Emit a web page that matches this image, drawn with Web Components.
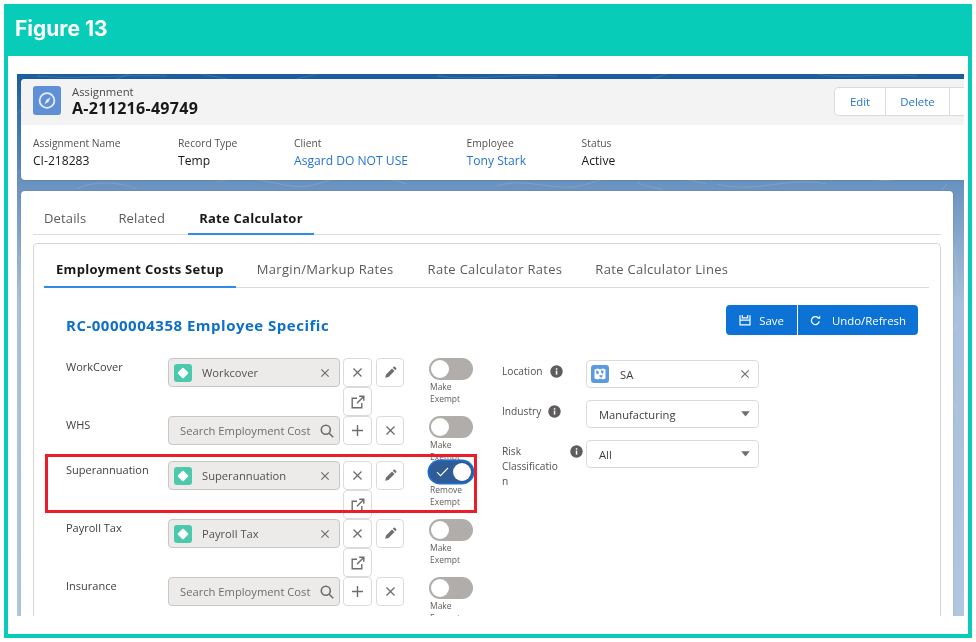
<!DOCTYPE html>
<html lang="en"><head><meta charset="utf-8"><title>Figure 13</title>
<style>
html,body{margin:0;padding:0;background:#fff;font-family:"Open Sans","Liberation Sans",sans-serif;}
</style></head><body>
<fig-frame title-text="Figure 13">
  <app-shell>
    <record-header slot="header" object="Assignment" name="A-211216-49749"></record-header>
    <tab-set slot="tabs" variant="outer" labels="Details|Related|Rate Calculator" active="2"></tab-set>
    <tab-set slot="subtabs" variant="inner" labels="Employment Costs Setup|Margin/Markup Rates|Rate Calculator Rates|Rate Calculator Lines" active="0"></tab-set>
    <span slot="title">RC-0000004358 Employee Specific</span>
    <action-bar slot="actions"></action-bar>
    <cost-row slot="left" label="WorkCover" value="Workcover"></cost-row>
    <cost-row slot="left" label="WHS" style="height:45px"></cost-row>
    <cost-row slot="left" label="Superannuation" value="Superannuation" on highlight></cost-row>
    <cost-row slot="left" label="Payroll Tax" value="Payroll Tax"></cost-row>
    <cost-row slot="left" label="Insurance"></cost-row>
    <side-field slot="right" label="Location" kind="lookup" value="SA" info-at="48"></side-field>
    <side-field slot="right" label="Industry" kind="select" value="Manufacturing" info-at="46"></side-field>
    <side-field slot="right" label="Risk Classification" kind="select" value="All" info-at="68" wrap></side-field>
  </app-shell>
</fig-frame>
<script>
const def=(name,render,css)=>customElements.define(name,class extends HTMLElement{
  connectedCallback(){ if(this.shadowRoot) return; const r=this.attachShadow({mode:'open'}); r.innerHTML='<style>'+css+'</style>'+render(this); }
});
const ic={
 x:s=>`<svg width="${s}" height="${s}" viewBox="0 0 12 12"><path d="M1.6 1.6l8.8 8.8M10.4 1.6l-8.8 8.8" stroke="#6f6d6b" stroke-width="1.4" fill="none"/></svg>`,
 plus:`<svg width="13" height="13" viewBox="0 0 13 13"><path d="M6.5 1v11M1 6.5h11" stroke="#6f6d6b" stroke-width="1.4" fill="none"/></svg>`,
 pencil:`<svg width="13" height="13" viewBox="0 0 13 13"><path d="M1.2 11.8l.8-3.3 6-6 2.5 2.5-6 6zM8.8 1.7l.9-.9a.9.9 0 0 1 1.2 0l1.3 1.3a.9.9 0 0 1 0 1.2l-.9.9z" fill="#706e6b"/></svg>`,
 ext:`<svg width="14" height="14" viewBox="0 0 14 14" fill="none" stroke="#6f6d6b" stroke-width="1.4"><path d="M6 3.2H1.2v9.6h9.6V8"/><path d="M6 8.2L12.4 1.7M8.2 1.2h4.6v4.6"/></svg>`,
 search:`<svg width="14" height="14" viewBox="0 0 14 14" fill="none" stroke="#6f6d6b" stroke-width="1.6"><circle cx="5.8" cy="5.8" r="4.5"/><path d="M9.2 9.2l4 4"/></svg>`,
 diamond:`<svg width="18" height="18" viewBox="0 0 18 18"><rect width="18" height="18" rx="3" fill="#4bc9ac"/><rect x="5" y="5" width="8" height="8" rx="1" fill="#fff" transform="rotate(45 9 9)"/></svg>`,
 info:`<svg width="13" height="13" viewBox="0 0 13 13"><circle cx="6.5" cy="6.5" r="6.2" fill="#5f5d5b"/><rect x="5.8" y="5.6" width="1.5" height="4" fill="#fff"/><rect x="5.8" y="3.2" width="1.5" height="1.5" fill="#fff"/></svg>`,
 caret:`<svg width="9" height="6" viewBox="0 0 9 6"><path d="M.3.3h8.4L4.5 5.6z" fill="#6f6d6b"/></svg>`,
 location:`<svg width="18" height="18" viewBox="0 0 18 18"><rect width="18" height="18" rx="3" fill="#5b9ae0"/><path d="M3.5 4.5l3.5-1 2 1 3-1 2.5 1v9l-2.5 1-3-1-2 1-3.5-1z" fill="#fff"/><path d="M5 5.6l2.4.3.5 2.600-2.300.9zM10 5.200l2.800.5-1 3.300-1.700-1.200zM8.500 10l3.500.5-1.500 2.300-2-1.200z" fill="#5b9ae0"/></svg>`,
 compass:`<svg width="28" height="29" viewBox="0 0 28 29"><rect width="28" height="29" rx="3" fill="#5f8fd6"/><circle cx="14" cy="14.500" r="7.400" fill="none" stroke="#e8eef9" stroke-width="1.800"/><path d="M17.800 10.700l-2.300 5.300-3 1.500-1.300 1.300 2.300-5.300 3-1.500z" fill="#e8eef9"/></svg>`,
 save:`<svg width="12" height="12" viewBox="0 0 12 12" fill="none" stroke="#fff" stroke-width="1.200"><path d="M1 1.200v9.600h10V1.200"/><path d="M3.300 1v2.800h5.400V1M1 6.200h10"/></svg>`,
 refresh:`<svg width="11" height="11" viewBox="0 0 11 11" fill="none" stroke="#fff" stroke-width="1.300"><path d="M9.300 6.400A4 4 0 1 1 8.200 2.700"/><path d="M10.200 .6v3.100H7.100" fill="#fff" stroke="none"/></svg>`,
 check:`<svg width="13" height="10" viewBox="0 0 13 10"><path d="M1 5.200l3.500 3.500L12 1" stroke="#fff" stroke-width="1.100" fill="none"/></svg>`
};
def('fig-frame',h=>`<header>${h.getAttribute('title-text')}</header><main><slot></slot></main>`,`
 :host{display:block;box-sizing:border-box;margin:4px 0 0 4px;width:968px;height:634px;background:#06ccb8;padding:0 4px 4px;}
 header{height:52px;display:flex;align-items:center;padding-left:7px;margin-top:0;color:#fff;font:700 21px/1 Inter,"Open Sans",sans-serif;box-sizing:border-box;padding-bottom:4px;filter:blur(.3px)}
 main{display:block;background:#fff;height:578px;padding:18px 4px 18px 9px;box-sizing:border-box}
`);
def('app-shell',()=>`
 <svg class="topo" width="947" height="542" viewBox="0 0 947 542" fill="none" stroke="#fff" stroke-opacity=".13" stroke-width="1">
  <path d="M0 40C40 0 70 20 100 5s60-10 110 0M200 108c40-12 70 12 100 2s50-12 90 0M480 112c30-10 60 8 90-2s60-14 120 0M700 110c40 10 70-8 110 0M900 120c30 10 40 50 40 90M940 250c-20 30-10 60 0 90"/>
  <path d="M0 100c10-12 25-10 40 0M0 180c8 10 4 30 0 40M60 115c20-10 45-6 60 0M620 108c10 6 16 4 26 8M820 105c20-8 40 6 60 0M930 110c-10 10-6 20 4 30M20 2c40 4 80-2 130 0M300 0l-40 10M420 2c40 6 80-4 120 0M650 0l-30 10M800 0c30 6 60-2 100 2"/>
 </svg>
 <div class="wrap">
  <slot name="header"></slot>
  <section class="card">
   <slot name="tabs"></slot>
   <div class="inner">
    <slot name="subtabs"></slot>
    <div class="titlebar"><h2><slot name="title"></slot></h2><slot name="actions"></slot></div>
    <div class="cols">
     <div class="left"><slot name="left"></slot></div>
     <div class="right"><slot name="right"></slot></div>
    </div>
   </div>
  </section>
 </div>`,`
 :host{display:block;position:relative;height:542px;overflow:hidden;background:linear-gradient(#1c5d9f 0,#2a68a7 4%,#6c94c0 21%,#a9bfdb 42%,#b1c6df 100%);filter:blur(.3px)}
 .topo{position:absolute;left:0;top:0}
 .wrap{position:relative;padding:5px 0 0 4px;height:100%;box-sizing:border-box}
 .card{background:#fff;border-radius:4px;width:932px;margin-top:11px;height:500px;box-sizing:border-box;padding:17px 0 0 12px;box-shadow:0 0 2px rgba(0,0,0,.15)}
 .inner{box-sizing:border-box;margin:8px 0 0 0;width:908px;height:420px;border:1px solid #d8d7d5;border-radius:4px;padding:10px 11px 0 10px}
 .titlebar{display:flex;justify-content:space-between;align-items:flex-start;padding:17px 11px 0 22px;height:70px;box-sizing:border-box}
 h2{margin:10px 0 0;font:700 15px/20px "Open Sans",sans-serif;color:#0c6fc9;letter-spacing:.5px}
 .cols{display:flex;padding:0 0 0 22px;}
 .left{width:436px;flex:none}
 .right{padding-top:2px}
`);
def('record-header',h=>`
 <div class="top">
  <div class="ico">${ic.compass}</div>
  <div class="names"><div class="obj">${h.getAttribute('object')}</div><div class="nm">${h.getAttribute('name')}</div></div>
  <div class="btns"><span style="width:50px">Edit</span><span style="width:63px">Delete</span><span class="cl">Clone</span></div>
 </div>
 <div class="fields">
  <hl-field style="width:145px" label="Assignment Name" value="CI-218283"></hl-field>
  <hl-field style="width:116px" label="Record Type" value="Temp"></hl-field>
  <hl-field style="width:172.600px" label="Client" value="Asgard DO NOT USE" link></hl-field>
  <hl-field style="width:115px" label="Employee" value="Tony Stark" link></hl-field>
  <hl-field label="Status" value="Active"></hl-field>
 </div>`,`
 :host{display:block;background:#fff;border-radius:4px 0 0 4px;height:101px;overflow:hidden;box-shadow:0 0 2px rgba(0,0,0,.2);margin-right:-20px}
 .top{height:46px;background:#f3f3f3;display:flex;align-items:flex-start;padding:7px 0 0 12px;box-sizing:border-box}
 .ico{width:28px;height:29px;flex:none;margin-right:11px}
 .ico svg{display:block}
 .names{flex:1;margin-top:-1px}
 .obj{font-size:11.300px;line-height:14px;color:#4a4a48}
 .nm{font-size:16px;line-height:18px;font-weight:700;color:#181818;letter-spacing:.3px}
 .btns{display:flex;height:29px;margin:1px 0 0;background:#fff;border:1px solid #dddbda;border-radius:4px 0 0 4px;box-sizing:border-box;flex:none;width:150px;overflow:hidden}
 .btns span{display:flex;align-items:center;justify-content:center;font-size:11.400px;color:#2574d4;border-right:1px solid #dddbda;flex:none}
 .btns .cl{border:0;padding-left:15px}
 .fields{display:flex;padding:11px 0 0 12px}
`);
def('hl-field',h=>`<div class="l">${h.getAttribute('label')}</div><div class="v ${h.hasAttribute('link')?'a':''}">${h.getAttribute('value')}</div>`,`
 :host{display:block;flex:none}
 .l{font-size:10.300px;line-height:14px;color:#54524f}
 .v{font-size:12.100px;line-height:18px;color:#181818;margin-top:2px}
 .a{color:#2574d4}
`);
def('tab-set',h=>{
 const act=+h.getAttribute('active');const v=h.getAttribute('variant');
 return `<div class="bar ${v}">`+h.getAttribute('labels').split('|').map((t,i)=>`<span class="${i==act?'on':''}">${t}</span>`).join('')+`</div>`;
},`
 :host{display:block}
 .bar{display:flex;border-bottom:1px solid #dddbda;box-sizing:border-box}
 span{display:block;box-sizing:border-box;margin-bottom:-1px;border-bottom:2px solid transparent;white-space:nowrap;color:#5c5a58}
 .on{color:#181818;font-weight:700;border-bottom-color:#2f8ae8}
 .outer{height:27px;font-size:13px;line-height:20px;width:908px;letter-spacing:.15px}
 .outer span{height:27px;padding:0 11px}
 .outer span:nth-child(2){padding:0 11px 0 21px}
 .outer span:nth-child(3){margin-left:12px;letter-spacing:.25px}
 .inner{height:34px;font-size:13px;line-height:20px;width:885px;letter-spacing:.3px}
 .inner span{height:34px;padding:5px 12px 0}
 .inner span:nth-child(n+2){margin-left:9px}
 .inner span:nth-child(3){margin-left:10px}
`);
def('action-bar',()=>`<button class="a">${ic.save}<span>Save</span></button><button class="b">${ic.refresh}<span>Undo/Refresh</span></button>`,`
 :host{display:flex;gap:1px}
 button{height:30px;background:#0c72d6;color:#fff;border:0;display:flex;align-items:center;justify-content:center;gap:8px;font:11.400px "Open Sans",sans-serif;padding:0}
 .a{width:71px;border-radius:4px 0 0 4px}
 .b{width:120px;border-radius:0 4px 4px 0;gap:11px}
`);
def('icon-btn',h=>`<slot></slot>`,`
 :host{display:flex;align-items:center;justify-content:center;box-sizing:border-box;background:#fff;border:1px solid #dddbda;border-radius:4px;width:29px;height:29px}
`);
def('cost-row',h=>{
 const v=h.getAttribute('value'),on=h.hasAttribute('on');
 const input=v?`<div class="inp"><span class="d">${ic.diamond}</span><span class="t">${v}</span><span class="e">${ic.x(10)}</span></div>`
  :`<div class="inp s"><span class="t ph">Search Employment Cost</span><span class="e">${ic.search}</span></div>`;
 const btns=v?`<icon-btn>${ic.x(11)}</icon-btn><icon-btn style="width:28px">${ic.pencil}</icon-btn><icon-btn>${ic.ext}</icon-btn>`
  :`<icon-btn>${ic.plus}</icon-btn><icon-btn style="width:28px">${ic.x(11)}</icon-btn>`;
 return `<div class="lab">${h.getAttribute('label')}</div>${input}<div class="bt">${btns}</div>
  <toggle-switch ${on?'on':''} text="${on?'Remove':'Make'} Exempt"></toggle-switch>${h.hasAttribute('highlight')?'<i class="hl"></i>':''}`;
},`
 :host{display:flex;position:relative;height:58px;align-items:flex-start}
 .lab{width:102px;font-size:11px;line-height:16px;color:#3e3e3c;flex:none;padding-top:0;margin-top:1px}
 .inp{width:172px;height:29px;flex:none;box-sizing:border-box;background:#ecebea;border:1px solid #c9c7c5;border-radius:4px;display:flex;align-items:center;padding:0 6px 0 5px;font-size:11.200px;color:#54524f}
 .d{display:block;width:18px;height:18px;margin-right:10px}
 .d svg{display:block}
 .t{flex:1;white-space:nowrap;overflow:hidden}
 .ph{padding-left:6px;color:#706e6b}
 .s{padding-right:5px}
 .e{display:flex;margin-right:3px}
 .s .e{margin-right:0}
 .bt{display:flex;flex-wrap:wrap;gap:0 4px;width:62px;margin-left:3px;flex:none}
 .hl{position:absolute;left:-21px;top:-7px;width:432px;height:59px;box-sizing:border-box;border:3px solid #ed1c2b;pointer-events:none;z-index:3}
`);
def('toggle-switch',h=>{
 const on=h.hasAttribute('on');const w=h.getAttribute('text').split(' ');
 return `<div class="tr ${on?'on':''}">${on?ic.check:''}<b></b></div><div class="tx">${w[0]}<br>${w[1]}</div>`;
},`
 :host{display:block;margin-left:24px;width:44px;flex:none;height:45px}
 .tr{width:44px;height:22px;border-radius:11px;background:#b0adaa;position:relative;display:flex;align-items:center;box-sizing:border-box}
 .tr b{display:block;width:18px;height:18px;border-radius:50%;background:#fff;position:absolute;left:2px;top:2px}
 .tr.on{background:#2f5b96;box-shadow:0 0 0 1.500px #1b73d3}
 .tr.on b{left:24px}
 .tr svg{margin-left:7px}
 .tx{font-size:8.500px;line-height:12px;color:#5f5d5b;margin:1px 0 0 1px;white-space:nowrap}
`);
def('side-field',h=>{
 const k=h.getAttribute('kind'),v=h.getAttribute('value');
 const ctl=k=='lookup'?`<div class="ctl"><span class="loc">${ic.location}</span><span class="val sa">${v}</span>${ic.x(10)}</div>`
  :`<div class="ctl"><span class="val">${v}</span>${ic.caret}</div>`;
 return `<div class="lab"><span class="txt ${h.hasAttribute('wrap')?'w':''}">${h.getAttribute('label')}</span><span class="inf" style="left:${h.getAttribute('info-at')}px">${ic.info}</span></div>${ctl}`;
},`
 :host{display:flex;height:40px;align-items:flex-start}
 .lab{width:84px;flex:none;position:relative;font-size:10.200px;line-height:15px;color:#54524f;padding-top:4px;box-sizing:border-box}
 .txt{display:block}
 .w{width:57px;overflow-wrap:break-word}
 .inf{position:absolute;top:5px}
 .inf svg{display:block}
 .ctl{width:173px;height:28px;box-sizing:border-box;background:#fff;border:1px solid #dddbda;border-radius:4px;display:flex;align-items:center;padding:0 8px 0 4px;font-size:11.200px;color:#3e3e3c}
 .val{flex:1;padding-left:8px}
 .sa{padding-left:11px}
 .loc{display:block;height:18px}
 .loc svg{display:block}
`);
</script>
</body></html>
